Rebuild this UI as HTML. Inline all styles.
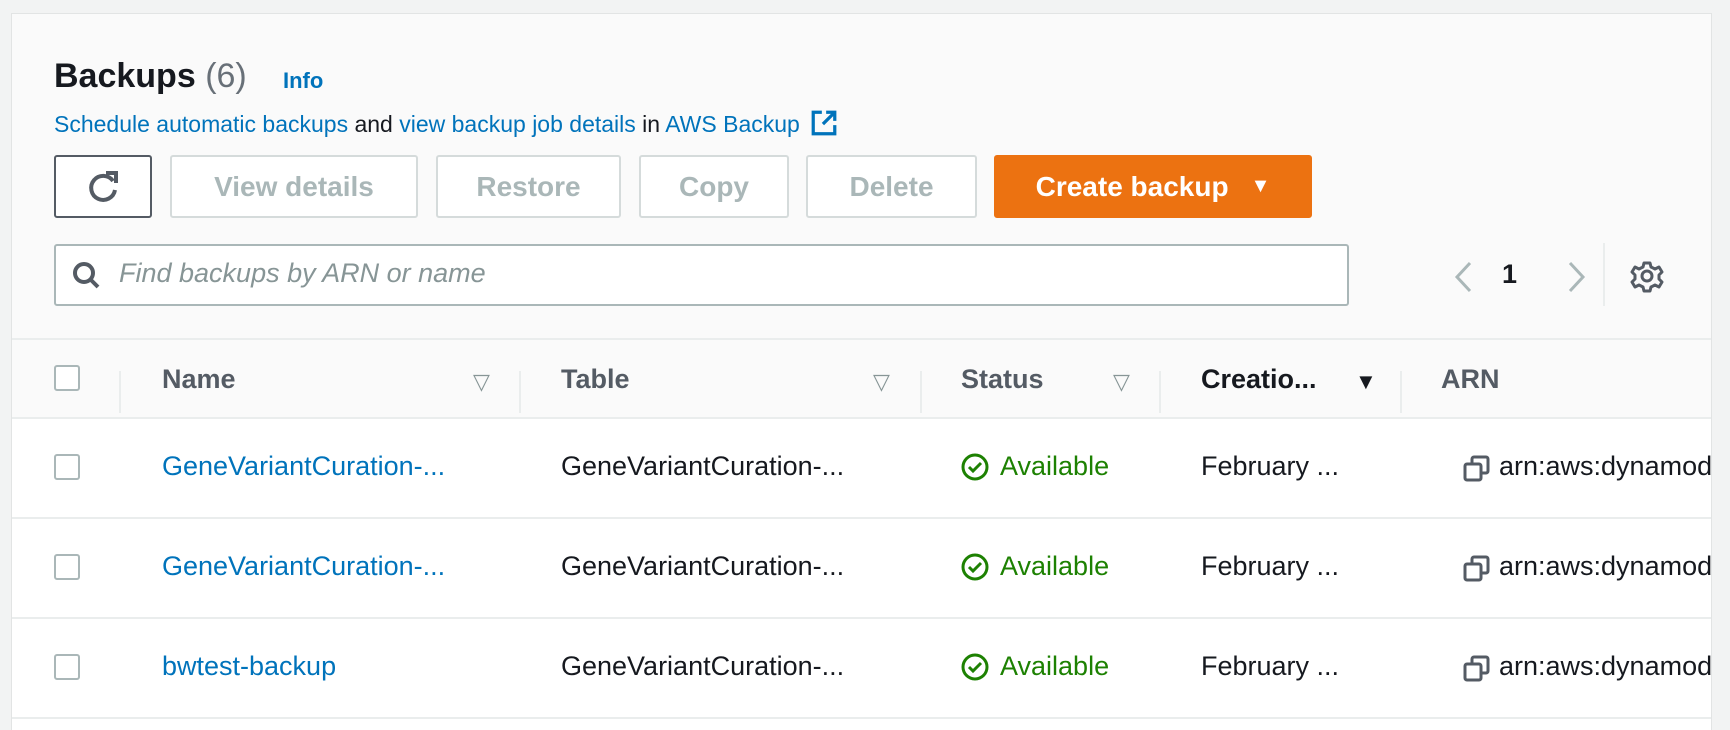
<!DOCTYPE html>
<html><head><meta charset="utf-8"><style>
*{margin:0;padding:0;box-sizing:border-box}
body{width:1730px;height:730px;background:#f2f3f3;font-family:"Liberation Sans",sans-serif;position:relative;overflow:hidden}
.panel{position:absolute;left:11px;top:13px;width:1701px;height:717px;background:#fafafa;border:1px solid #e2e4e4;border-bottom:none;overflow:hidden}
.a{position:absolute;white-space:nowrap}
.btn{position:absolute;top:141px;height:63px;border:2px solid #d5dbdb;border-radius:3px;background:#fff;color:#aab7b8;font-weight:bold;font-size:28px;display:flex;align-items:center;justify-content:center}
.link{color:#0073bb}
.hdr{font-weight:bold;font-size:27px;color:#545b64;top:350px}
.row{position:absolute;left:0;width:1701px;height:100px;background:#fff;border-top:2px solid #eaeded}
.cb{position:absolute;left:42px;width:26px;height:26px;border:2px solid #aab7b8;border-radius:3px;background:#fff}
.cell{position:absolute;font-size:27px;color:#16191f;white-space:nowrap;top:32px}
.vd{position:absolute;top:357px;width:2px;height:42px;background:#eaeded}
.tri{position:absolute;top:355px;color:#879596;font-size:22px}
</style></head><body>
<div class="panel">
 <div class="a" style="left:42px;top:43px;font-size:34px;font-weight:bold;color:#16191f">Backups <span style="font-weight:normal;color:#687078">(6)</span></div>
 <div class="a link" style="left:271px;top:54px;font-size:22px;font-weight:bold">Info</div>
 <div class="a" style="left:42px;top:95px;font-size:23px;color:#16191f"><span class="link">Schedule automatic backups</span> and <span class="link">view backup job details</span> in <span class="link">AWS Backup</span>
  <svg width="28" height="28" viewBox="0 0 26 26" style="vertical-align:-5px;margin-left:4px"><path d="M11 3H3v20h20v-8" fill="none" stroke="#0073bb" stroke-width="3"/><path d="M15 3h8v8M23 3L12 14" fill="none" stroke="#0073bb" stroke-width="3"/></svg></div>
 <div class="btn" style="left:42px;width:98px;border-color:#545b64"><svg width="34" height="36" viewBox="0 0 34 36"><path d="M27 12A12 12 0 1 0 29 21" fill="none" stroke="#545b64" stroke-width="4"/><path d="M20 4h10v10" fill="none" stroke="#545b64" stroke-width="4"/></svg></div>
 <div class="btn" style="left:158px;width:248px">View details</div>
 <div class="btn" style="left:424px;width:185px">Restore</div>
 <div class="btn" style="left:627px;width:150px">Copy</div>
 <div class="btn" style="left:794px;width:171px">Delete</div>
 <div class="btn" style="left:982px;width:318px;background:#ec7211;border-color:#ec7211;color:#fff">Create backup <span style="font-size:20px;margin-left:22px">▼</span></div>
 <div class="a" style="left:42px;top:230px;width:1295px;height:62px;border:2px solid #aab7b8;border-radius:3px;background:#fff"></div>
 <svg class="a" style="left:60px;top:247px" width="30" height="30" viewBox="0 0 30 30"><circle cx="12" cy="12" r="9" fill="none" stroke="#545b64" stroke-width="4"/><path d="M18 18l8 8" stroke="#545b64" stroke-width="4"/></svg>
 <div class="a" style="left:107px;top:244px;font-size:27px;font-style:italic;color:#879596">Find backups by ARN or name</div>
 <svg class="a" style="left:1441px;top:246px" width="20" height="34" viewBox="0 0 20 34"><path d="M17 3L4 17l13 14" fill="none" stroke="#aab7b8" stroke-width="3"/></svg>
 <div class="a" style="left:1490px;top:245px;font-size:27px;font-weight:bold;color:#16191f">1</div>
 <svg class="a" style="left:1555px;top:246px" width="20" height="34" viewBox="0 0 20 34"><path d="M3 3l13 14L3 31" fill="none" stroke="#aab7b8" stroke-width="3"/></svg>
 <div class="a" style="left:1591px;top:229px;width:2px;height:63px;background:#eaeded"></div>
 <svg class="a" style="left:1618px;top:245px" width="34" height="34" viewBox="0 0 34 34"><circle cx="17" cy="17" r="5" fill="none" stroke="#545b64" stroke-width="3"/><path d="M14 4h6l1 4 4 2 4-2 3 5-3 3v4l3 3-3 5-4-2-4 2-1 4h-6l-1-4-4-2-4 2-3-5 3-3v-4l-3-3 3-5 4 2 4-2z" fill="none" stroke="#545b64" stroke-width="3" stroke-linejoin="round"/></svg>
 <div class="a" style="left:0;top:324px;width:1701px;height:2px;background:#eaeded"></div>
 <div class="cb" style="top:351px"></div>
 <div class="vd" style="left:107px"></div><div class="vd" style="left:507px"></div><div class="vd" style="left:908px"></div><div class="vd" style="left:1147px"></div><div class="vd" style="left:1388px"></div>
 <div class="a hdr" style="left:150px">Name</div><div class="tri" style="left:461px">▽</div>
 <div class="a hdr" style="left:549px">Table</div><div class="tri" style="left:861px">▽</div>
 <div class="a hdr" style="left:949px">Status</div><div class="tri" style="left:1101px">▽</div>
 <div class="a hdr" style="left:1189px;color:#16191f">Creatio...</div><div class="tri" style="left:1343px;color:#16191f">▼</div>
 <div class="a hdr" style="left:1429px">ARN</div>

 <div class="row" style="top:403px"><div class="cb" style="top:35px"></div><div class="cell link" style="left:150px;color:#0073bb">GeneVariantCuration-...</div><div class="cell" style="left:549px">GeneVariantCuration-...</div><svg class="a" style="left:948px;top:33px" width="30" height="30" viewBox="0 0 30 30"><circle cx="15" cy="15" r="12" fill="none" stroke="#1d8102" stroke-width="3"/><path d="M9 15l4 4 8-8" fill="none" stroke="#1d8102" stroke-width="3"/></svg><div class="cell" style="left:988px;color:#1d8102">Available</div><div class="cell" style="left:1189px">February ...</div><svg class="a" style="left:1451px;top:36px" width="28" height="28" viewBox="0 0 28 28"><rect x="9" y="2" width="16" height="16" rx="2" fill="none" stroke="#545b64" stroke-width="3"/><rect x="2" y="9" width="16" height="16" rx="2" fill="#fff" stroke="#545b64" stroke-width="3"/></svg><div class="cell" style="left:1487px">arn:aws:dynamodb:us-east-1</div></div>
 <div class="row" style="top:503px"><div class="cb" style="top:35px"></div><div class="cell link" style="left:150px;color:#0073bb">GeneVariantCuration-...</div><div class="cell" style="left:549px">GeneVariantCuration-...</div><svg class="a" style="left:948px;top:33px" width="30" height="30" viewBox="0 0 30 30"><circle cx="15" cy="15" r="12" fill="none" stroke="#1d8102" stroke-width="3"/><path d="M9 15l4 4 8-8" fill="none" stroke="#1d8102" stroke-width="3"/></svg><div class="cell" style="left:988px;color:#1d8102">Available</div><div class="cell" style="left:1189px">February ...</div><svg class="a" style="left:1451px;top:36px" width="28" height="28" viewBox="0 0 28 28"><rect x="9" y="2" width="16" height="16" rx="2" fill="none" stroke="#545b64" stroke-width="3"/><rect x="2" y="9" width="16" height="16" rx="2" fill="#fff" stroke="#545b64" stroke-width="3"/></svg><div class="cell" style="left:1487px">arn:aws:dynamodb:us-east-1</div></div>
 <div class="row" style="top:603px"><div class="cb" style="top:35px"></div><div class="cell link" style="left:150px;color:#0073bb">bwtest-backup</div><div class="cell" style="left:549px">GeneVariantCuration-...</div><svg class="a" style="left:948px;top:33px" width="30" height="30" viewBox="0 0 30 30"><circle cx="15" cy="15" r="12" fill="none" stroke="#1d8102" stroke-width="3"/><path d="M9 15l4 4 8-8" fill="none" stroke="#1d8102" stroke-width="3"/></svg><div class="cell" style="left:988px;color:#1d8102">Available</div><div class="cell" style="left:1189px">February ...</div><svg class="a" style="left:1451px;top:36px" width="28" height="28" viewBox="0 0 28 28"><rect x="9" y="2" width="16" height="16" rx="2" fill="none" stroke="#545b64" stroke-width="3"/><rect x="2" y="9" width="16" height="16" rx="2" fill="#fff" stroke="#545b64" stroke-width="3"/></svg><div class="cell" style="left:1487px">arn:aws:dynamodb:us-east-1</div></div>
 <div class="row" style="top:703px;height:14px"></div>
</div>
</body></html>
